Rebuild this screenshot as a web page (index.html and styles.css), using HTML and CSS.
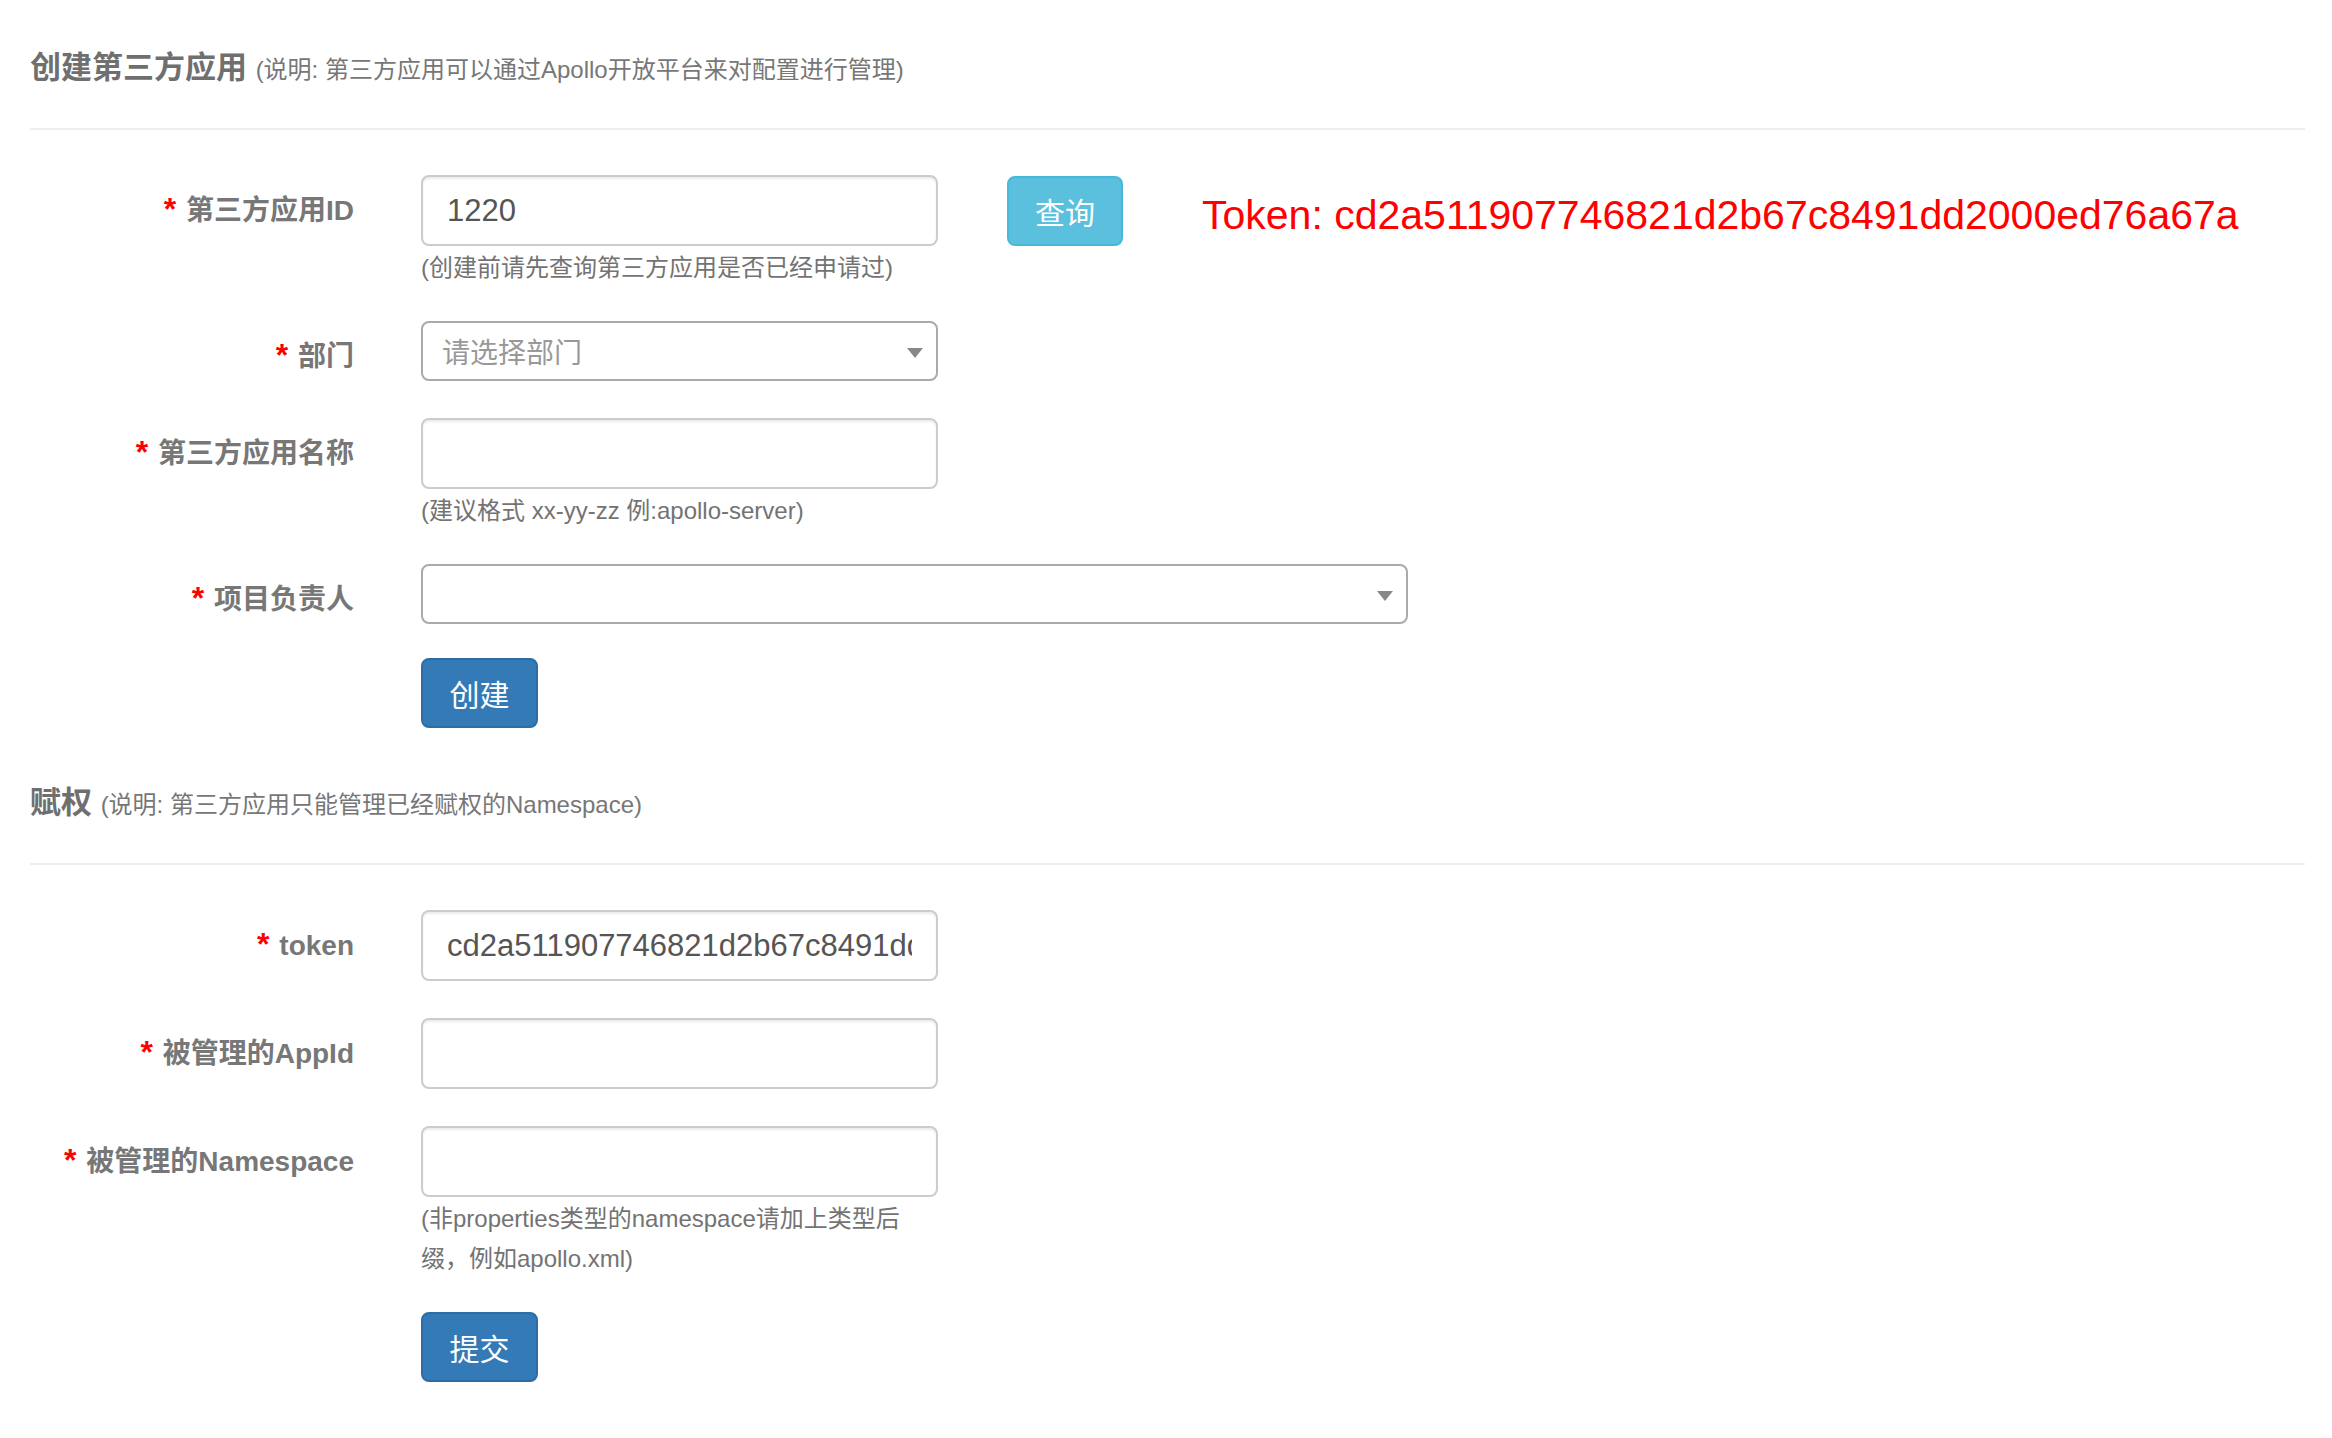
FILE: index.html
```html
<!DOCTYPE html>
<html lang="zh-CN">
<head>
<meta charset="utf-8">
<title>创建第三方应用</title>
<link rel="stylesheet" href="styles.css">
</head>
<body>
<div class="page">
  <div class="section-head">
    <h5 class="section-title">创建第三方应用 <small class="section-note">(说明: 第三方应用可以通过Apollo开放平台来对配置进行管理)</small></h5>
  </div>
  <form class="form">
    <div class="form-group">
      <label class="form-label"><span class="req">*</span> 第三方应用ID</label>
      <div class="control">
        <div class="inline-row">
          <input class="input" type="text" value="1220">
          <button type="button" class="btn btn-info">查询</button>
          <span class="token-text">Token: cd2a511907746821d2b67c8491dd2000ed76a67a</span>
        </div>
        <p class="help">(创建前请先查询第三方应用是否已经申请过)</p>
      </div>
    </div>
    <div class="form-group">
      <label class="form-label"><span class="req">*</span> 部门</label>
      <div class="control">
        <div class="select select-narrow">
          <span class="placeholder">请选择部门</span>
          <span class="arrow"></span>
        </div>
      </div>
    </div>
    <div class="form-group">
      <label class="form-label"><span class="req">*</span> 第三方应用名称</label>
      <div class="control">
        <input class="input" type="text">
        <p class="help">(建议格式 xx-yy-zz 例:apollo-server)</p>
      </div>
    </div>
    <div class="form-group form-group-tight">
      <label class="form-label"><span class="req">*</span> 项目负责人</label>
      <div class="control">
        <div class="select select-wide">
          <span class="placeholder"></span>
          <span class="arrow"></span>
        </div>
      </div>
    </div>
    <div class="form-group">
      <div></div>
      <div class="control">
        <button type="button" class="btn btn-primary">创建</button>
      </div>
    </div>
  </form>

  <div class="section-head section-head-second">
    <h5 class="section-title">赋权 <small class="section-note">(说明: 第三方应用只能管理已经赋权的Namespace)</small></h5>
  </div>
  <form class="form">
    <div class="form-group">
      <label class="form-label"><span class="req">*</span> token</label>
      <div class="control">
        <input class="input" type="text" value="cd2a511907746821d2b67c8491dd2000ed76a67a">
      </div>
    </div>
    <div class="form-group">
      <label class="form-label"><span class="req">*</span> 被管理的AppId</label>
      <div class="control">
        <input class="input" type="text">
      </div>
    </div>
    <div class="form-group">
      <label class="form-label"><span class="req">*</span> 被管理的Namespace</label>
      <div class="control">
        <input class="input" type="text">
        <p class="help help-wrap">(非properties类型的namespace请加上类型后缀，例如apollo.xml)</p>
      </div>
    </div>
    <div class="form-group">
      <div></div>
      <div class="control">
        <button type="button" class="btn btn-primary">提交</button>
      </div>
    </div>
  </form>
</div>
</body>
</html>
```

FILE: styles.css
```css
* { box-sizing: border-box; }

html, body {
  margin: 0;
  padding: 0;
  background: #fff;
}

body {
  font-family: "Liberation Sans", "Noto Sans CJK SC", sans-serif;
  color: #333;
}

.page {
  padding: 48px 27px 0 30px;
}

.section-head {
  border-bottom: 2px solid #eee;
  padding-bottom: 40px;
}

.section-head-second {
  margin-top: 18px;
}

.section-title {
  margin: 0;
  height: 40px;
  font-size: 31px;
  line-height: 40px;
  font-weight: bold;
  color: #6f6f6f;
  white-space: nowrap;
}

.section-note {
  font-size: 24px;
  line-height: 1;
  font-weight: normal;
  color: #777;
}

.form {
  display: flow-root;
  padding-top: 45px;
}

.form-group {
  display: grid;
  grid-template-columns: 324px 1fr;
  column-gap: 67px;
  margin-bottom: 37px;
}

.form-group-tight {
  margin-bottom: 34px;
}

.form-label {
  text-align: right;
  font-size: 28px;
  line-height: 40px;
  padding-top: 14px;
  font-weight: bold;
  color: #777;
  white-space: nowrap;
}

.req {
  color: #f00;
  font-size: 32px;
  margin-right: 2px;
}

.control {
  min-width: 0;
}

.inline-row {
  display: flex;
  align-items: center;
}

.input {
  display: block;
  width: 517px;
  height: 71px;
  border: 2px solid #ccc;
  border-radius: 8px;
  padding: 0 24px;
  font-family: "Liberation Sans", "Noto Sans CJK SC", sans-serif;
  font-size: 31px;
  color: #555;
  background: #fff;
  box-shadow: inset 0 2px 2px rgba(0, 0, 0, 0.075);
  outline: none;
}

.btn {
  height: 70px;
  padding: 0 20px;
  border-radius: 8px;
  font-family: "Liberation Sans", "Noto Sans CJK SC", sans-serif;
  font-size: 30px;
  color: #fff;
  cursor: pointer;
}

.btn-info {
  width: 116px;
  margin-left: 69px;
  background: #5bc0de;
  border: 2px solid #46b8da;
}

.btn-primary {
  width: 117px;
  background: #337ab7;
  border: 2px solid #2e6da4;
}

.token-text {
  margin-left: 79px;
  padding-top: 10px;
  font-size: 41px;
  color: #f00;
  white-space: nowrap;
}

.help {
  margin: 2px 0 -4px;
  font-size: 24px;
  line-height: 40px;
  color: #737373;
}

.help-wrap {
  max-width: 500px;
}

.select {
  position: relative;
  height: 60px;
  border: 2px solid #aaa;
  border-radius: 8px;
  background: #fff;
  display: flex;
  align-items: center;
  padding-left: 19px;
}

.select-narrow { width: 517px; }
.select-wide { width: 987px; }

.placeholder {
  font-size: 28px;
  color: #999;
}

.arrow {
  position: absolute;
  right: 13px;
  top: 50%;
  margin-top: -3px;
  width: 0;
  height: 0;
  border-style: solid;
  border-width: 10px 8px 0 8px;
  border-color: #888 transparent transparent transparent;
}
```
